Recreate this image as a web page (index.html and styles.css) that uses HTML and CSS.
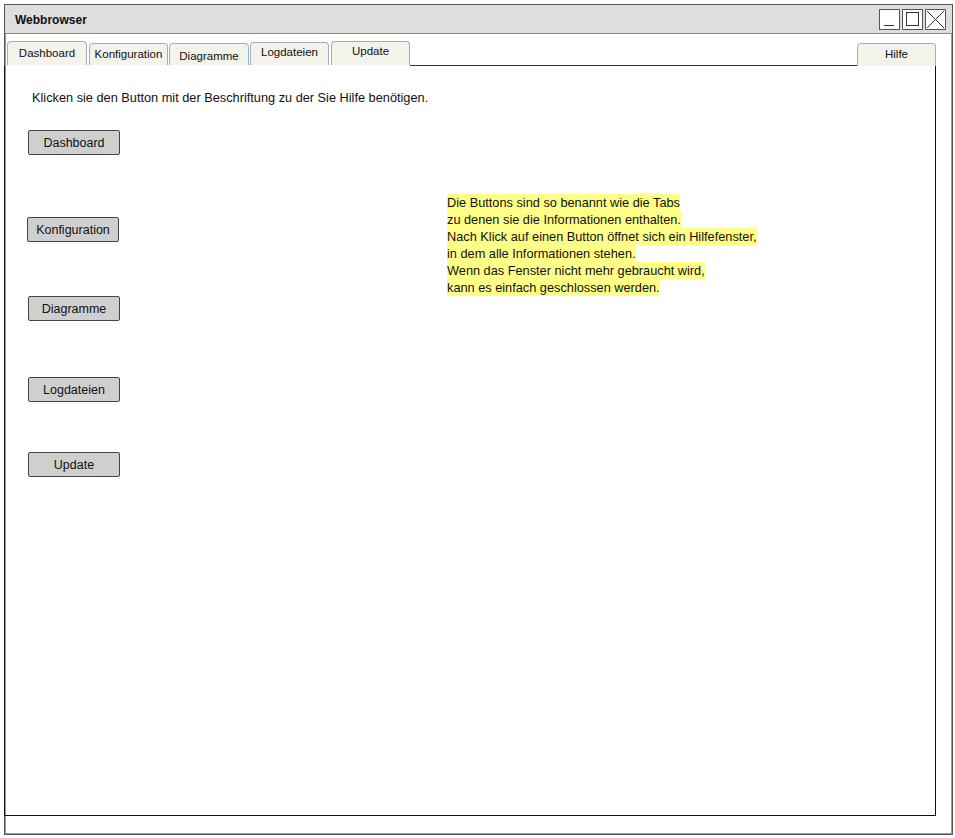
FILE: index.html
```html
<!DOCTYPE html>
<html lang="de">
<head>
<meta charset="utf-8">
<title>Webbrowser</title>
<link rel="stylesheet" href="styles.css">
</head>
<body>
<div class="window">
  <div class="titlebar">
    <span class="title">Webbrowser</span>
    <div class="controls">
      <span class="ctrl"><svg width="21" height="21" viewBox="0 0 21 21"><line x1="5" y1="16.5" x2="15" y2="16.5" stroke="#333" stroke-width="1"/></svg></span>
      <span class="ctrl"><svg width="21" height="21" viewBox="0 0 21 21"><rect x="4.5" y="3.5" width="12" height="13" fill="none" stroke="#333" stroke-width="1"/></svg></span>
      <span class="ctrl"><svg width="21" height="21" viewBox="0 0 21 21"><line x1="2" y1="2" x2="19" y2="19" stroke="#333" stroke-width="1"/><line x1="19" y1="2" x2="2" y2="19" stroke="#333" stroke-width="1"/></svg></span>
    </div>
  </div>
  <div class="body">
    <div class="tabs">
      <span class="tab t-dash">Dashboard</span>
      <span class="tab t-konf">Konfiguration</span>
      <span class="tab t-diag">Diagramme</span>
      <span class="tab t-log">Logdateien</span>
      <span class="tab t-upd">Update</span>
      <span class="tabline"></span>
      <span class="tab active">Hilfe</span>
    </div>
    <div class="panel">
      <p class="intro">Klicken sie den Button mit der Beschriftung zu der Sie Hilfe benötigen.</p>
      <div class="row">
        <div class="buttons">
          <span class="btn b-dash">Dashboard</span>
          <span class="btn b-konf">Konfiguration</span>
          <span class="btn b-diag">Diagramme</span>
          <span class="btn b-log">Logdateien</span>
          <span class="btn b-upd">Update</span>
        </div>
        <div class="note">
          <span class="hl">Die Buttons sind so benannt wie die Tabs</span>
          <span class="hl">zu denen sie die Informationen enthalten.</span>
          <span class="hl">Nach Klick auf einen Button öffnet sich ein Hilfefenster,</span>
          <span class="hl">in dem alle Informationen stehen.</span>
          <span class="hl">Wenn das Fenster nicht mehr gebraucht wird,</span>
          <span class="hl">kann es einfach geschlossen werden.</span>
        </div>
      </div>
    </div>
  </div>
</div>
</body>
</html>
```
FILE: styles.css
```css
html, body {
  margin: 0;
  padding: 0;
  background: #ffffff;
}
body {
  font-family: "Liberation Sans", Arial, sans-serif;
  color: #111;
}
.window {
  margin: 4px 0 0 4px;
  width: 949px;
  height: 831px;
  box-sizing: border-box;
  border: 1px solid #555;
  box-shadow: inset 1px 1px 0 #9a9a9a, inset -1px -1px 0 #9a9a9a;
  display: flex;
  flex-direction: column;
  background: #fff;
}
.titlebar {
  height: 28px;
  flex: none;
  background: #dedede;
  border-bottom: 1px solid #8a8a8a;
  display: flex;
  align-items: center;
  justify-content: space-between;
  padding: 0 6px 0 10px;
}
.title {
  font-weight: bold;
  font-size: 12px;
  padding-top: 1px;
}
.controls {
  display: flex;
  gap: 2px;
  padding-top: 1px;
}
.ctrl {
  width: 21px;
  height: 21px;
  box-sizing: border-box;
  border: 1px solid #555;
  background: #fff;
  display: flex;
}
.ctrl svg {
  margin: -1px;
}
.body {
  flex: 1;
  display: flex;
  flex-direction: column;
  padding: 0 16px 18px 0;
}
.tabs {
  display: flex;
  align-items: flex-end;
  height: 32px;
  flex: none;
  padding-left: 2px;
}
.tab {
  box-sizing: border-box;
  width: 79px;
  background: #f3f3eb;
  border: 1px solid #9eb0bb;
  border-bottom: none;
  border-radius: 4px 4px 0 0;
  font-size: 11.5px;
  text-align: center;
  display: flex;
  justify-content: center;
}
.tabs > .tab:not(.active) {
  margin-bottom: 1px;
}
.t-dash { width: 80px; height: 24px; padding-top: 5px; margin-right: 2px; }
.t-konf { height: 22px; padding-top: 4px; margin-right: 1px; }
.t-diag { width: 80px; height: 22px; padding-top: 6px; margin-right: 1px; }
.t-log { height: 23px; padding-top: 3px; margin-right: 2px; }
.t-upd { height: 24px; padding-top: 3px; }
.tabline {
  flex: 1;
  align-self: flex-end;
  border-bottom: 1px solid #333;
}
.tab.active {
  width: 79px;
  height: 23px;
  padding-top: 4px;
  border-bottom: none;
  border-right: 1px solid #9eb0bb;
}
.panel {
  flex: 1;
  border: 1px solid #111;
  border-top: none;
  padding: 23px 0 0 27px;
  font-size: 12.75px;
  margin-left: -1px;
}
.intro {
  margin: 0;
  line-height: 17px;
}
.row {
  display: flex;
  align-items: flex-start;
  margin-top: 24px;
}
.buttons {
  display: flex;
  flex-direction: column;
  align-items: flex-start;
}
.btn {
  box-sizing: border-box;
  width: 92px;
  height: 25px;
  background: #cfcfcf;
  border: 1px solid #444;
  border-radius: 2px;
  display: flex;
  align-items: center;
  justify-content: center;
  font-size: 12.5px;
}
.b-dash { margin-left: -4px; }
.b-konf { margin-top: 62px; margin-left: -5px; }
.b-diag { margin-top: 54px; margin-left: -4px; }
.b-log { margin-top: 56px; margin-left: -4px; }
.b-upd { margin-top: 50px; margin-left: -4px; }
.note {
  margin-left: 327px;
  margin-top: 64px;
  display: flex;
  flex-direction: column;
  align-items: flex-start;
  line-height: 17px;
}
.hl {
  background: #ffff88;
}
```
